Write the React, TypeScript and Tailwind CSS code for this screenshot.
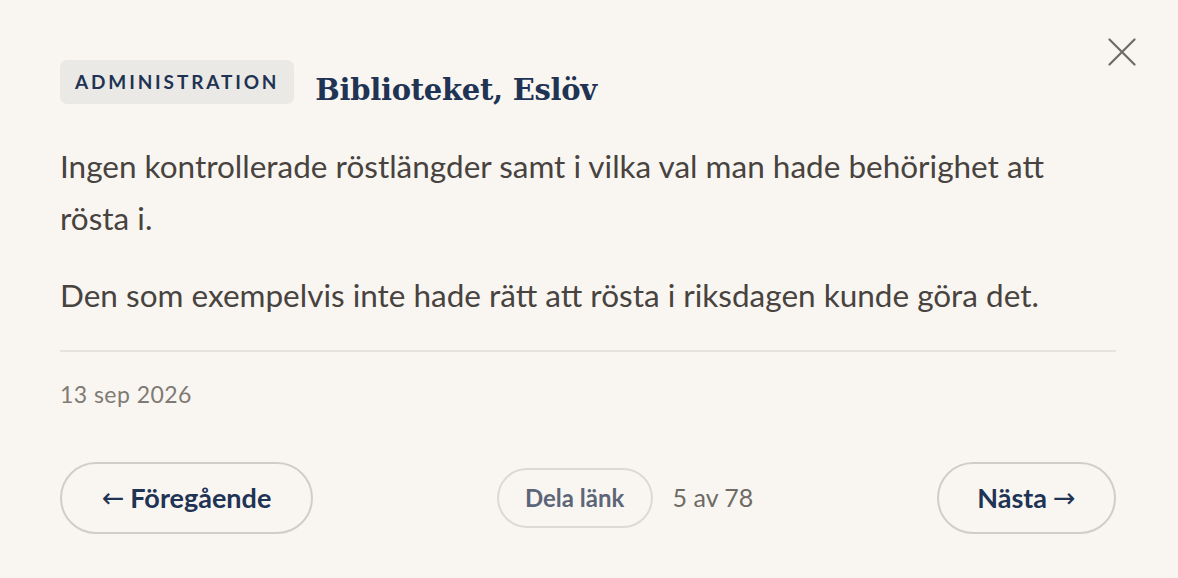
const NAVY = "#1f3354"

function CloseIcon() {
  return (
    <svg width="28" height="28" viewBox="0 0 28 28" fill="none" stroke="currentColor" strokeWidth="2.2" strokeLinecap="round">
      <path d="M1.5 1.5 26.5 26.5M26.5 1.5 1.5 26.5" />
    </svg>
  )
}

const arrow = "font-['DejaVu_Sans',sans-serif] font-normal"

export default function App() {
  return (
    <div className="relative min-h-[578px] w-full bg-[#f9f6f2] px-[60px] pt-[60px] font-['Lato','Noto_Sans',sans-serif]">
      <button className="absolute right-[42px] top-[38px] text-[#6d6b67]" aria-label="Stäng">
        <CloseIcon />
      </button>

      <div className="flex items-start gap-[21px]">
        <span className="inline-flex h-[44px] items-center rounded-[7px] bg-[#ebe9e5] px-[15px] text-[19px] font-bold tracking-[0.15em]" style={{ color: NAVY }}>
          ADMINISTRATION
        </span>
        <h1 className="mt-[12px] font-['DejaVu_Serif',serif] text-[29px] leading-[36px] font-bold tracking-[-0.01em]" style={{ color: NAVY }}>
          Biblioteket, Eslöv
        </h1>
      </div>

      <div className="mt-[32px] w-[1056px] text-[31.5px] leading-[52px] text-[#48433e]">
        <p>Ingen kontrollerade röstlängder samt i vilka val man hade behörighet att rösta i.</p>
        <p className="mt-[25px]">Den som exempelvis inte hade rätt att rösta i riksdagen kunde göra det.</p>
      </div>

      <div className="mt-[29px] h-[2px] w-[1056px] bg-[#e6e2dc]" />

      <div className="mt-[28px] text-[23px] leading-[28px] tracking-[0.02em] text-[#7f7a73]">13 sep 2026</div>

      <div className="mt-[54px] flex w-[1056px] items-center justify-between">
        <button className="flex h-[72px] w-[253px] items-center justify-center gap-[6px] rounded-full border-2 border-[#cfcecb] text-[27px] font-bold" style={{ color: NAVY }}>
          <span className={arrow}>←</span>Föregående
        </button>
        <div className="flex items-center gap-[20px]">
          <button className="h-[60px] w-[156px] rounded-full border-2 border-[#dcdad6] text-[24px] font-bold text-[#5d6679]">
            Dela länk
          </button>
          <span className="text-[25px] text-[#6e6a64]">5 av 78</span>
        </div>
        <button className="flex h-[72px] w-[179px] items-center justify-center gap-[6px] rounded-full border-2 border-[#cfcecb] text-[27px] font-bold" style={{ color: NAVY }}>
          Nästa<span className={arrow}>→</span>
        </button>
      </div>
    </div>
  )
}
